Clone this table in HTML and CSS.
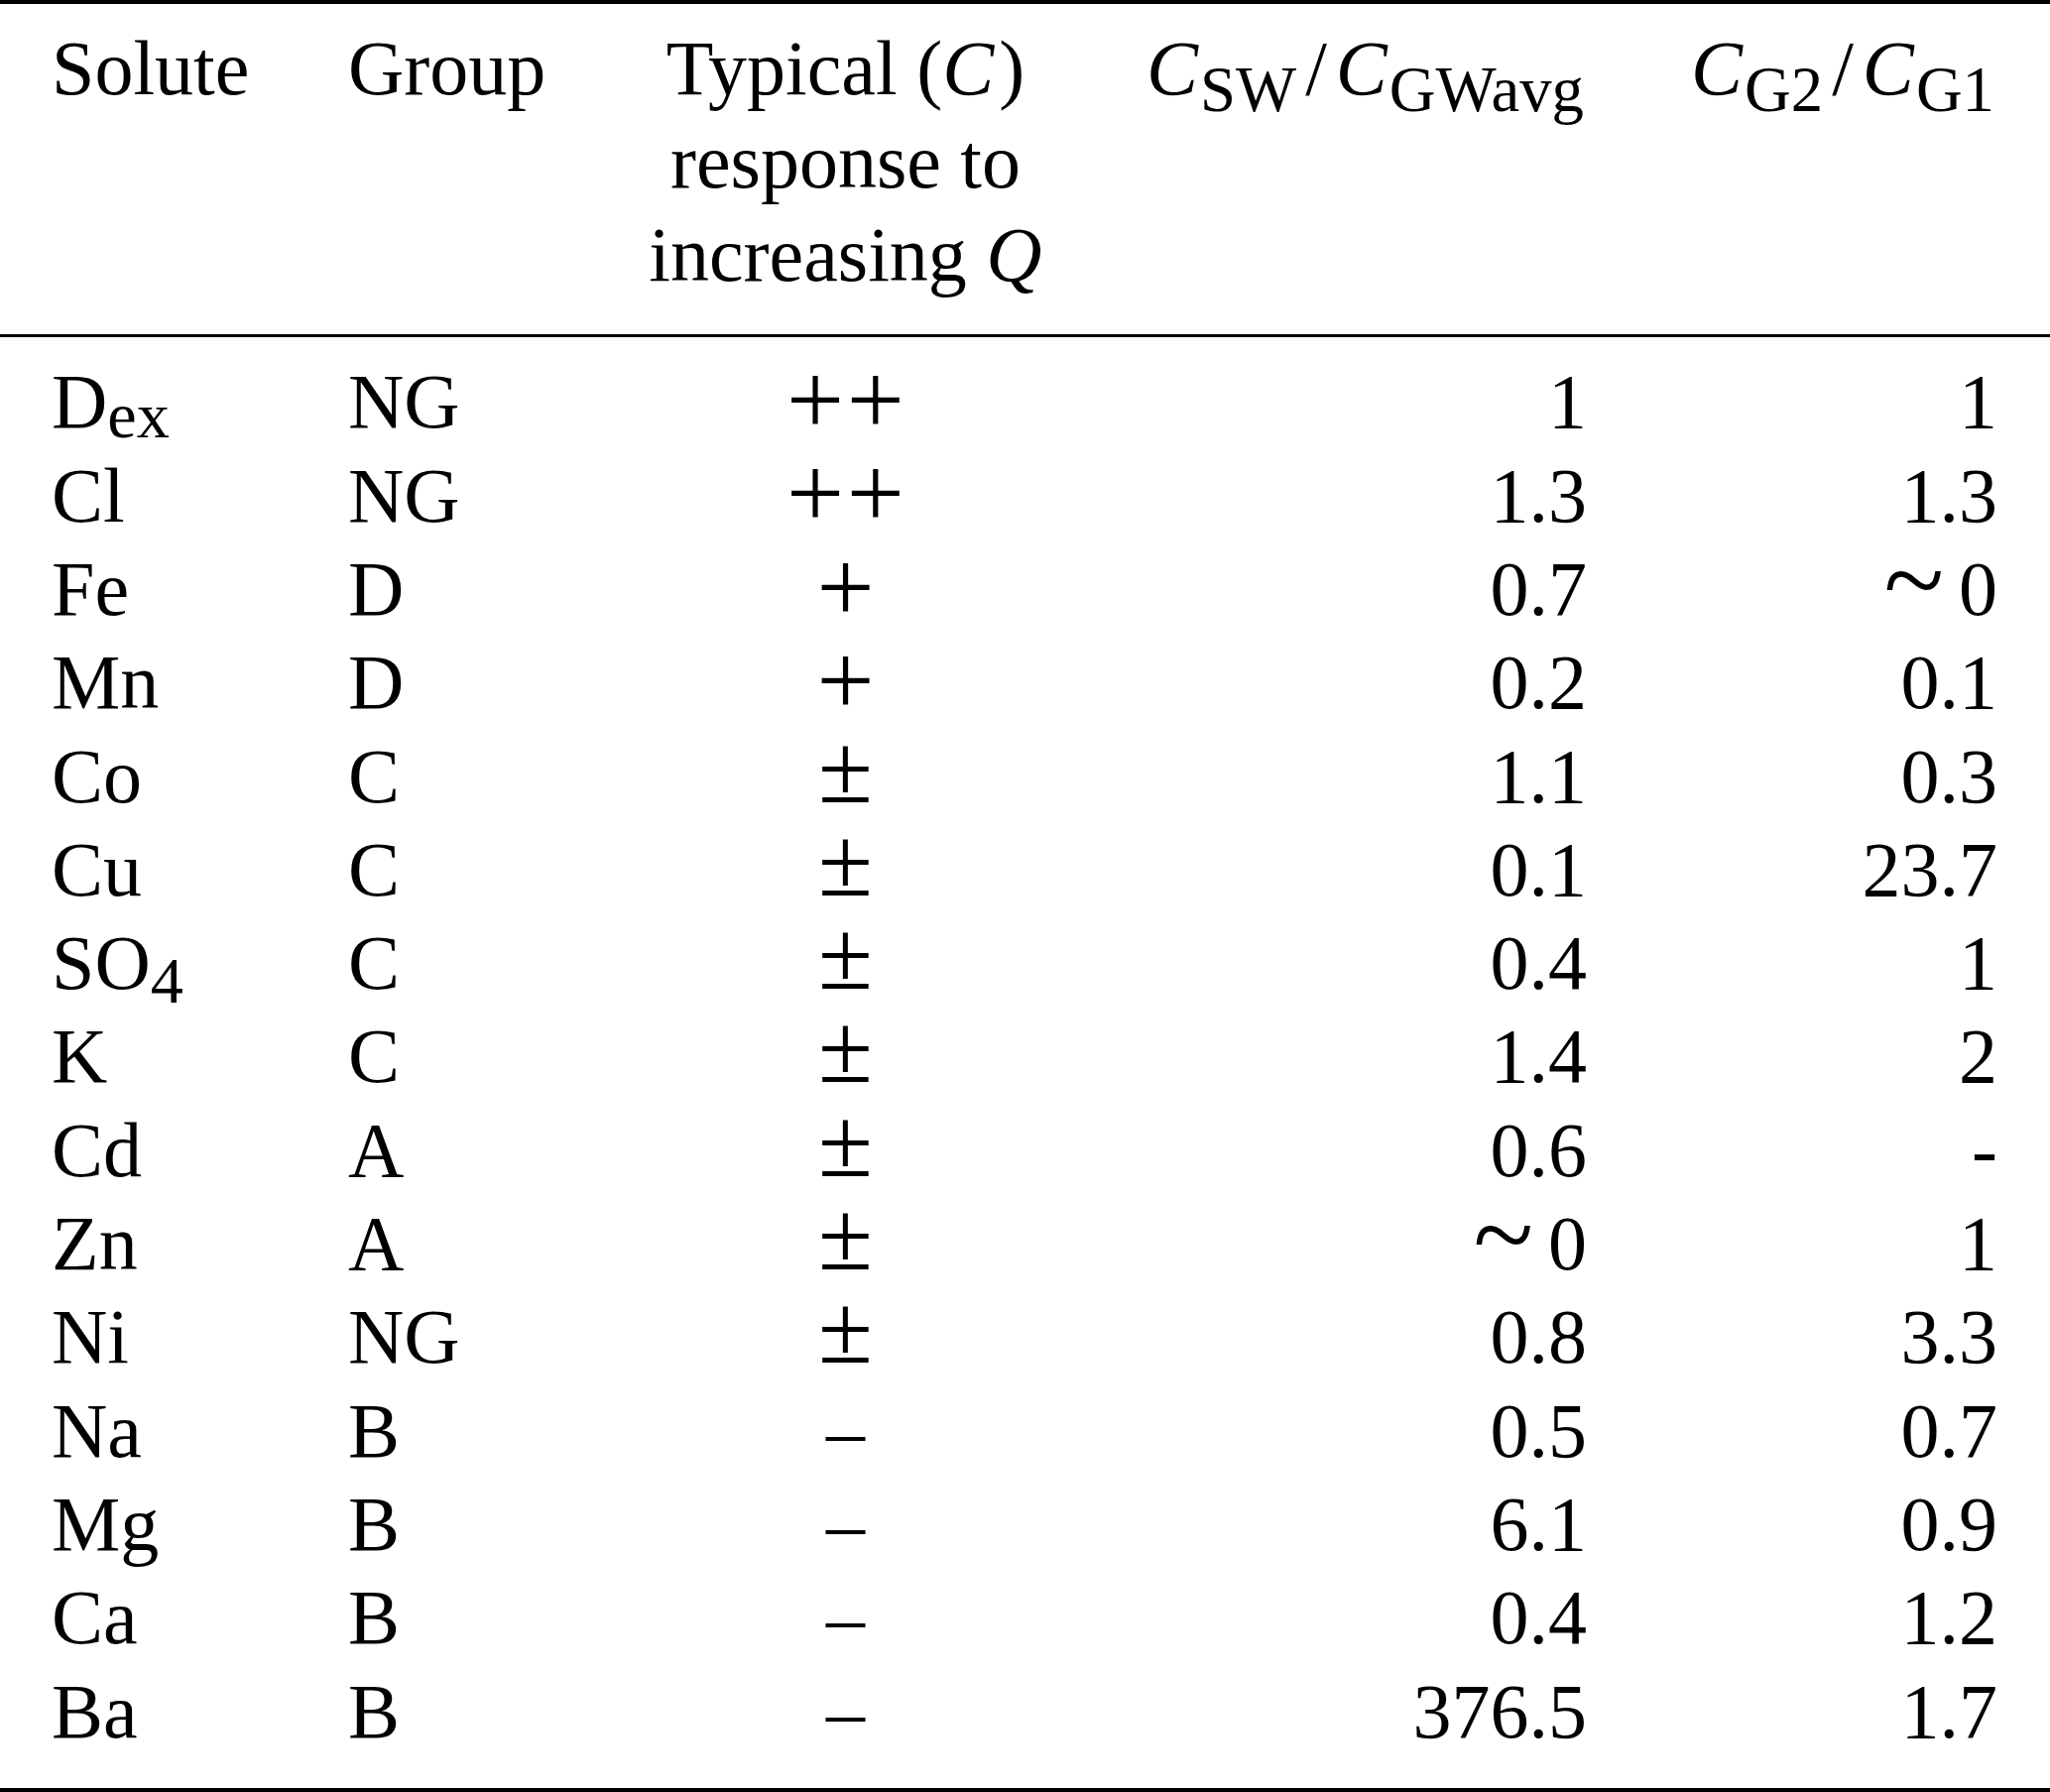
FILE: index.html
```html
<!DOCTYPE html>
<html lang="en">
<head>
<meta charset="utf-8">
<title>Solute response table</title>
<link rel="stylesheet" href="styles.css">
</head>
<body>
<table class="tbl">
  <thead>
    <tr>
      <th class="k1">Solute</th>
      <th class="k2">Group</th>
      <th class="k3">Typical (<span class="mi paren">C</span>)<br>response to<br>increasing <span class="mi">Q</span></th>
      <th class="k4"><span class="mi mc">C</span><span class="hsub">SW</span><span class="slash">/</span><span class="mi mc">C</span><span class="hsub">GWavg</span></th>
      <th class="k5"><span class="mi mc">C</span><span class="hsub">G2</span><span class="slash">/</span><span class="mi mc">C</span><span class="hsub">G1</span></th>
    </tr>
  </thead>
  <tbody>
    <tr><td>D<span class="lsub">ex</span></td><td>NG</td><td><span class="plus pp">++</span></td><td>1</td><td>1</td></tr>
    <tr><td>Cl</td><td>NG</td><td><span class="plus pp">++</span></td><td>1.3</td><td>1.3</td></tr>
    <tr><td>Fe</td><td>D</td><td><span class="plus">+</span></td><td>0.7</td><td><span class="sim">~</span>0</td></tr>
    <tr><td>Mn</td><td>D</td><td><span class="plus">+</span></td><td>0.2</td><td>0.1</td></tr>
    <tr><td>Co</td><td>C</td><td><span class="pm">±</span></td><td>1.1</td><td>0.3</td></tr>
    <tr><td>Cu</td><td>C</td><td><span class="pm">±</span></td><td>0.1</td><td>23.7</td></tr>
    <tr><td>SO<span class="dsub">4</span></td><td>C</td><td><span class="pm">±</span></td><td>0.4</td><td>1</td></tr>
    <tr><td>K</td><td>C</td><td><span class="pm">±</span></td><td>1.4</td><td>2</td></tr>
    <tr><td>Cd</td><td>A</td><td><span class="pm">±</span></td><td>0.6</td><td>-</td></tr>
    <tr><td>Zn</td><td>A</td><td><span class="pm">±</span></td><td><span class="sim">~</span>0</td><td>1</td></tr>
    <tr><td>Ni</td><td>NG</td><td><span class="pm">±</span></td><td>0.8</td><td>3.3</td></tr>
    <tr><td>Na</td><td>B</td><td>–</td><td>0.5</td><td>0.7</td></tr>
    <tr><td>Mg</td><td>B</td><td>–</td><td>6.1</td><td>0.9</td></tr>
    <tr><td>Ca</td><td>B</td><td>–</td><td>0.4</td><td>1.2</td></tr>
    <tr><td>Ba</td><td>B</td><td>–</td><td>376.5</td><td>1.7</td></tr>
  </tbody>
</table>
</body>
</html>
```
FILE: styles.css
```css
html, body {
  margin: 0;
  padding: 0;
  background: #ffffff;
}

.tbl {
  border-collapse: separate;
  border-spacing: 0;
  table-layout: fixed;
  width: 2067px;
  font-family: "Liberation Serif", "Times New Roman", serif;
  font-size: 78px;
  line-height: 94.3px;
  color: #000000;
}

.tbl th,
.tbl td {
  box-sizing: border-box;
  padding: 0;
  white-space: nowrap;
  font-weight: normal;
}

.tbl th {
  vertical-align: top;
  padding-top: 17.5px;
  padding-bottom: 33px;
  border-top: 4px solid #000000;
  border-bottom: 3px solid #000000;
}

.k1 { width: 300px; }
.k2 { width: 300px; }
.k3 { width: 505px; }
.k4 { width: 547px; }
.k5 { width: 415px; }

.tbl th:nth-child(1),
.tbl td:nth-child(1) {
  text-align: left;
  padding-left: 52px;
}

.tbl th:nth-child(2),
.tbl td:nth-child(2) {
  text-align: left;
  padding-left: 51px;
}

.tbl th:nth-child(3),
.tbl td:nth-child(3) {
  text-align: center;
}

.tbl th:nth-child(4),
.tbl td:nth-child(4) {
  text-align: right;
  padding-right: 52px;
}

.tbl th:nth-child(5),
.tbl td:nth-child(5) {
  text-align: right;
  padding-right: 53px;
}

.tbl tbody tr:first-child td {
  padding-top: 18px;
}

.tbl tbody tr:last-child td {
  padding-bottom: 30px;
  border-bottom: 4px solid #000000;
}

.mi {
  font-style: italic;
}

.paren {
  margin-right: 5px;
}

.mc {
  margin-right: 2px;
}

.hsub {
  font-size: 0.83em;
  line-height: 0;
  vertical-align: -17px;
  margin-right: 3px;
}

.slash {
  margin: 0 9px 0 6px;
}

.lsub {
  font-size: 0.85em;
  line-height: 0;
  vertical-align: -10px;
}

.dsub {
  font-size: 0.85em;
  line-height: 0;
  vertical-align: -14px;
}

.plus {
  font-size: 103px;
  line-height: 0;
  vertical-align: -6.5px;
}

.pp {
  letter-spacing: 2.7px;
  margin-right: -2.7px;
}

.pm {
  font-size: 100px;
  line-height: 0;
}

.sim {
  font-size: 112px;
  line-height: 0;
  vertical-align: -3px;
  margin-right: 15px;
}
```
